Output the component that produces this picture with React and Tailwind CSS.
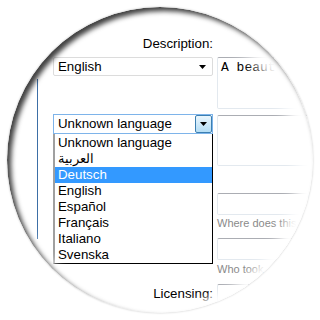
const languages = [
  "Unknown language",
  "العربية",
  "Deutsch",
  "English",
  "Español",
  "Français",
  "Italiano",
  "Svenska",
];

function Arrow() {
  return (
    <svg width="7" height="4" viewBox="0 0 7 4">
      <path d="M0 0h7L3.5 4z" fill="#000" />
    </svg>
  );
}

function TextBox({ className = "", children }) {
  return (
    <div
      className={`rounded-[2px] border border-[#e3e9ef] border-t-[#abadb3] bg-white ${className}`}
    >
      {children}
    </div>
  );
}

export default function App() {
  return (
    <div className="h-[320px] w-[320px] bg-white p-[7px] font-['Liberation_Sans',Arial,sans-serif] text-[13.3px] text-black">
      <div className="relative h-[306px] w-[306px] overflow-hidden rounded-full bg-white shadow-[0_0_2px_rgba(0,0,0,0.25)]">
        <div className="flex pl-[30px] pt-[29px]">
          {/* fieldset edge */}
          <div className="mt-[43px] h-[160px] w-px shrink-0 bg-[#3d6fa6]" />

          {/* Left column */}
          <div className="ml-[15px] flex w-[160px] shrink-0 flex-col">
            <div className="h-[15px] text-right leading-[15px]">Description:</div>

            <div className="mt-[6px] flex h-[19px] items-center justify-between rounded-[2px] border border-[#dcdcdc] bg-white pl-[4px] pr-[6px] leading-none">
              <span>English</span>
              <Arrow />
            </div>

            <div className="mt-[38px] flex h-[20px] items-center justify-between border border-[#7eb4ea] bg-white pl-[4px] leading-none">
              <span>Unknown language</span>
              <div className="flex h-full w-[17px] items-center justify-center rounded-[2px] border border-[#3c7fb1] bg-gradient-to-b from-[#eaf6fd] to-[#b4ddf5]">
                <Arrow />
              </div>
            </div>

            <div className="flex flex-col border-b border-l-2 border-r border-b-black border-l-[#a0a0a0] border-r-black bg-white pt-px">
              {languages.map((lang) => (
                <div
                  key={lang}
                  className={`h-[16px] pl-[3px] leading-[16px] ${
                    lang === "Deutsch" ? "bg-[#3399ff] text-white" : ""
                  }`}
                >
                  {lang}
                </div>
              ))}
            </div>

            <div className="mt-[22px] h-[15px] text-right leading-[15px]">Licensing:</div>
          </div>

          {/* Right column */}
          <div className="ml-[4px] flex w-[92px] shrink-0 flex-col pt-[21px]">
            <TextBox className="h-[52px] overflow-hidden whitespace-nowrap pl-[3px] pt-[2px] font-['Liberation_Mono','Courier_New',monospace] text-[13px] leading-[15px]">
              A beaut
            </TextBox>
            <TextBox className="mt-[6px] h-[51px]" />
            <TextBox className="mt-[27px] h-[22px]" />
            <div className="mt-[2px] whitespace-nowrap text-[11px] leading-[13px] text-[#8a8a8a]">
              Where does this
            </div>
            <TextBox className="mt-[8px] h-[22px]" />
            <div className="mt-[3px] whitespace-nowrap text-[11px] leading-[13px] text-[#8a8a8a]">
              Who took
            </div>
            <TextBox className="mt-[8px] h-[20px]" />
          </div>
        </div>

        {/* lens rim */}
        <div className="pointer-events-none absolute inset-0 rounded-full shadow-[inset_4px_4px_5px_rgba(0,0,0,0.75),inset_-16px_8px_14px_#fff,inset_0_-6px_10px_#fff]" />
      </div>
    </div>
  );
}
